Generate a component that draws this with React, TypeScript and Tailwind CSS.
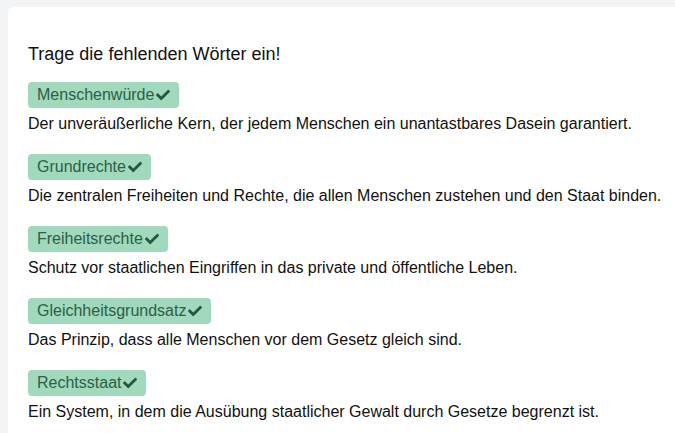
import { FaCheck } from 'react-icons/fa';

const items = [
  { word: 'Menschenwürde', text: 'Der unveräußerliche Kern, der jedem Menschen ein unantastbares Dasein garantiert.' },
  { word: 'Grundrechte', text: 'Die zentralen Freiheiten und Rechte, die allen Menschen zustehen und den Staat binden.' },
  { word: 'Freiheitsrechte', text: 'Schutz vor staatlichen Eingriffen in das private und öffentliche Leben.' },
  { word: 'Gleichheitsgrundsatz', text: 'Das Prinzip, dass alle Menschen vor dem Gesetz gleich sind.' },
  { word: 'Rechtsstaat', text: 'Ein System, in dem die Ausübung staatlicher Gewalt durch Gesetze begrenzt ist.' },
];

export default function App() {
  return (
    <div className="h-[433px] overflow-hidden bg-[#f3f4f6] pl-[8px] pt-[7px] font-['Liberation_Sans',Arial,sans-serif]">
      <div className="h-full rounded-tl-[6px] bg-white pl-[20px] pt-[35px] text-[#111]">
        <h1 className="text-[18px] leading-[24px]">Trage die fehlenden Wörter ein!</h1>
        <div className="mt-[16px] flex flex-col gap-[18px]">
          {items.map((it) => (
            <div key={it.word}>
              <span className="inline-flex items-center rounded-[4px] bg-[#a0d9bc] px-[9px] py-[3px] text-[16px] leading-[20px] text-[#2f5d47]">
                {it.word}
                <FaCheck className="ml-[2px] h-[14px] w-[14px] text-[#285641]" />
              </span>
              <p className="mt-[4px] text-[16px] leading-[24px]">{it.text}</p>
            </div>
          ))}
        </div>
      </div>
    </div>
  );
}
